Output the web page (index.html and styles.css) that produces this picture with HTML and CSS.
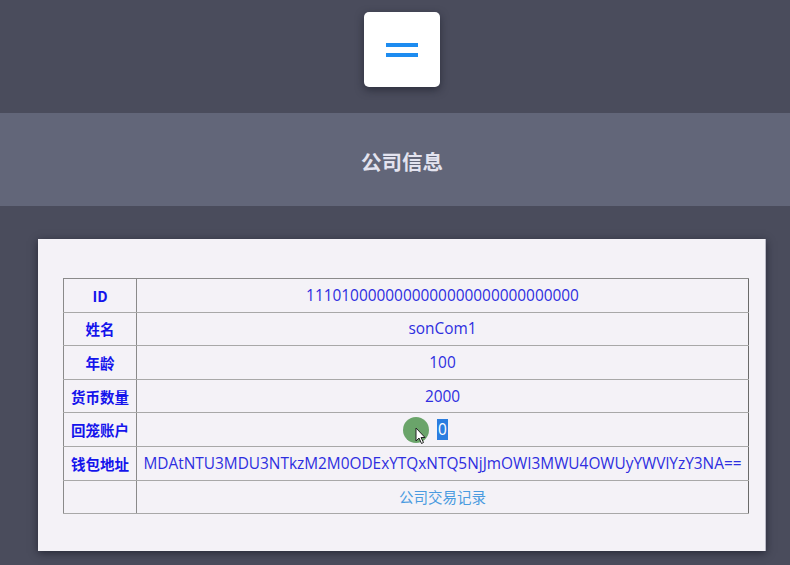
FILE: index.html
```html
<!DOCTYPE html>
<html lang="zh">
<head>
<meta charset="utf-8">
<title>公司信息</title>
<link rel="stylesheet" href="styles.css">
</head>
<body>
<header class="top">
  <button class="menu-btn" type="button" aria-label="menu">
    <span class="bar"></span>
    <span class="bar"></span>
  </button>
</header>
<section class="band">
  <h1 class="title">公司信息</h1>
</section>
<main class="content">
  <div class="card">
    <table class="info">
      <tr><th>ID</th><td>1110100000000000000000000000000</td></tr>
      <tr><th>姓名</th><td>sonCom1</td></tr>
      <tr><th>年龄</th><td>100</td></tr>
      <tr><th>货币数量</th><td>2000</td></tr>
      <tr><th>回笼账户</th><td class="cursor-cell"><span class="sel">0</span><span class="click"></span><svg class="pointer" width="12" height="18" viewBox="0 0 12 18"><path d="M1 1 L1 14 L4 11 L6.5 16.5 L8.5 15.5 L6 10.5 L10 10.5 Z" fill="#fff" stroke="#222" stroke-width="1"/></svg></td></tr>
      <tr><th>钱包地址</th><td>MDAtNTU3MDU3NTkzM2M0ODExYTQxNTQ5NjJmOWI3MWU4OWUyYWVlYzY3NA==</td></tr>
      <tr><th></th><td><a class="link" href="#">公司交易记录</a></td></tr>
    </table>
  </div>
</main>
</body>
</html>
```
FILE: styles.css
```css
html, body {
  margin: 0;
  padding: 0;
}
body {
  background: #4a4c5c;
  font-family: "Open Sans", "Noto Sans", "Noto Sans CJK SC", sans-serif;
  width: 790px;
  height: 565px;
  overflow: hidden;
}
.top {
  height: 113px;
  display: flex;
  justify-content: center;
  align-items: flex-start;
  padding: 12px 0 0 14px;
  box-sizing: border-box;
}
.menu-btn {
  width: 76px;
  height: 75px;
  background: #fff;
  border: none;
  border-radius: 5px;
  box-shadow: 0 3px 8px rgba(20, 22, 35, 0.55);
  display: flex;
  flex-direction: column;
  align-items: center;
  justify-content: center;
  gap: 6px;
  padding: 0;
}
.bar {
  display: block;
  width: 32px;
  height: 4px;
  background: #1e8cf0;
}
.band {
  height: 93px;
  background: #626679;
  display: flex;
  align-items: center;
  justify-content: center;
  padding-left: 14px;
}
.title {
  margin: 0;
  font-family: "Noto Sans CJK SC", sans-serif;
  font-size: 20.5px;
  font-weight: 700;
  color: #e3e3ef;
  transform: translateY(1px);
}
.content {
  padding: 33px 24px 0 38px;
}
.card {
  width: 728px;
  height: 312px;
  box-sizing: border-box;
  background: #f4f2f7;
  box-shadow: 0 2px 8px rgba(15, 17, 30, 0.6);
  border-right: 1px solid #b8b8c4;
  padding: 39px 17px 0 25px;
}
.info {
  width: 686px;
  border-collapse: collapse;
  border: 1px solid #6a6a6a;
  table-layout: fixed;
}
.info th, .info td {
  height: 33.6px;
  padding: 0;
  box-sizing: border-box;
  text-align: center;
  border-left: 1px solid #8a8a8a;
  border-top: 1px solid #8a8a8a;
  border-bottom: 1px solid #a8a8a8;
  color: #2e2ee0;
}
.info th {
  width: 73px;
  font-family: "Noto Sans CJK SC", sans-serif;
  font-size: 14.5px;
  font-weight: 700;
  color: #1414ec;
}
.info td {
  font-size: 15.4px;
  font-weight: 400;
  white-space: nowrap;
}
.cursor-cell {
  position: relative;
}
.sel {
  background: #2a7de0;
  color: #fff;
  padding: 0 1px;
}
.click {
  position: absolute;
  left: 266px;
  top: 4px;
  width: 26px;
  height: 26px;
  border-radius: 50%;
  background: #6aa46a;
}
.pointer {
  position: absolute;
  left: 278px;
  top: 14px;
}
.link {
  font-family: "Noto Sans CJK SC", sans-serif;
  font-size: 14.5px;
  color: #4a9be0;
  text-decoration: none;
}
```
